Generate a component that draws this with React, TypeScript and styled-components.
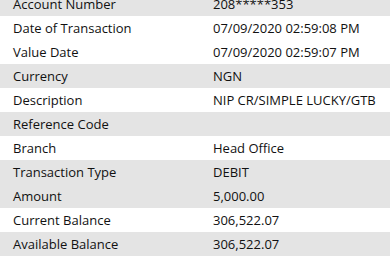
import styled, { createGlobalStyle } from 'styled-components';

const GlobalStyle = createGlobalStyle`
  html, body {
    margin: 0;
    padding: 0;
    background: #ffffff;
    overflow: hidden;
  }
`;

const Table = styled.div`
  width: 390px;
  margin-top: -8px;
  font-family: 'Open Sans', 'Noto Sans', sans-serif;
  font-size: 13px;
  color: #111111;
`;

interface RowProps {
  $shaded: boolean;
}

const Row = styled.div<RowProps>`
  display: grid;
  grid-template-columns: 200px 1fr;
  align-items: center;
  height: 24px;
  background-color: ${props => (props.$shaded ? '#e4e4e4' : '#ffffff')};
`;

const Cell = styled.div`
  padding-left: 13px;
  white-space: nowrap;
`;

const rows = [
  { label: 'Account Number', value: '208*****353', shaded: true },
  { label: 'Date of Transaction', value: '07/09/2020 02:59:08 PM', shaded: false },
  { label: 'Value Date', value: '07/09/2020 02:59:07 PM', shaded: false },
  { label: 'Currency', value: 'NGN', shaded: true },
  { label: 'Description', value: 'NIP CR/SIMPLE LUCKY/GTB', shaded: false },
  { label: 'Reference Code', value: '', shaded: true },
  { label: 'Branch', value: 'Head Office', shaded: false },
  { label: 'Transaction Type', value: 'DEBIT', shaded: true },
  { label: 'Amount', value: '5,000.00', shaded: true },
  { label: 'Current Balance', value: '306,522.07', shaded: false },
  { label: 'Available Balance', value: '306,522.07', shaded: true },
];

function App() {
  return (
    <>
      <GlobalStyle />
      <Table>
        {rows.map(row => (
          <Row key={row.label} $shaded={row.shaded}>
            <Cell>{row.label}</Cell>
            <Cell>{row.value}</Cell>
          </Row>
        ))}
      </Table>
    </>
  );
}

export default App;
